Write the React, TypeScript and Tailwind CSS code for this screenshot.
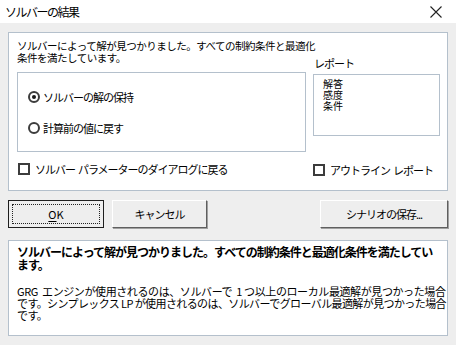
import React from "react";

const font = { fontFamily: '"Noto Sans CJK JP", "Noto Sans", sans-serif' };

function Radio({ checked }: { checked?: boolean }) {
  return (
    <span className="w-[12px] h-[12px] rounded-full border-2 border-[#3c3c3c] bg-white flex items-center justify-center shrink-0">
      {checked && <span className="w-[4px] h-[4px] rounded-full bg-[#1a1a1a]" />}
    </span>
  );
}

function Check() {
  return <span className="w-[12px] h-[12px] border-2 border-[#3c3c3c] bg-white shrink-0" />;
}

function Btn({ w, children }: { w: string; children: React.ReactNode }) {
  return (
    <div
      className={`${w} h-[28px] flex items-center justify-center border-t border-l border-white border-r border-b border-r-[#5f5f5f] border-b-[#5f5f5f] shadow-[1px_1px_0_#a0a0a0] text-[11px] tracking-[-1px] text-black`}
    >
      {children}
    </div>
  );
}

export default function App() {
  return (
    <div
      className="w-[456px] h-[345px] bg-[#eeeeee] text-black overflow-hidden leading-none"
      style={font}
    >
      <div className="h-[23px] bg-white flex items-center justify-between pl-[5px] pr-[14px]">
        <span className="text-[12px] tracking-[-1.5px]">ソルバーの結果</span>
        <svg width="12" height="12" viewBox="0 0 12 12">
          <path d="M0.5 0.5 L11.5 11.5 M11.5 0.5 L0.5 11.5" stroke="#222" strokeWidth="1.1" />
        </svg>
      </div>
      <div className="px-[8px] pt-[9px]">
        <div className="h-[159px] bg-white border border-[#b4c0cc] pl-[8px] pt-[7px]">
          <div className="flex">
            <div className="w-[289px] flex flex-col">
              <div className="text-[10.5px] tracking-[-0.5px] leading-[12px] whitespace-nowrap">
                ソルバーによって解が見つかりました。すべての制約条件と最適化
                <br />
                条件を満たしています。
              </div>
              <div className="mt-[8px] h-[80px] border border-[#b4c0cc] pl-[10px] flex flex-col">
                <div className="flex items-center gap-[3px] mt-[18px]">
                  <Radio checked />
                  <span className="text-[11px] tracking-[-1px]">ソルバーの解の保持</span>
                </div>
                <div className="flex items-center gap-[3px] mt-[19px]">
                  <Radio />
                  <span className="text-[11px] tracking-[-1px]">計算前の値に戻す</span>
                </div>
              </div>
            </div>
            <div className="ml-[7px] w-[127px] flex flex-col">
              <div className="mt-[18px] h-[14px] text-[11px] tracking-[-1px] pl-[1px]">レポート</div>
              <div className="mt-[2px] h-[62px] border border-[#b4c0cc] pl-[9px] pt-[3px] text-[10px] leading-[11px]">
                <div>解答</div>
                <div>感度</div>
                <div>条件</div>
              </div>
            </div>
          </div>
          <div className="flex mt-[10px]">
            <div className="w-[296px] flex items-center gap-[5px] pl-[1px]">
              <Check />
              <span className="text-[11px] tracking-[-1px] whitespace-pre">ソルバー  パラメーターのダイアログに戻る</span>
            </div>
            <div className="flex items-center gap-[5px] mt-[2px]">
              <Check />
              <span className="text-[11px] tracking-[-1px] whitespace-pre">アウトライン  レポート</span>
            </div>
          </div>
        </div>
        <div className="flex mt-[9px] h-[28px]">
          <div className="w-[96px] h-[28px] border border-[#1e1e1e] p-[3px]">
            <div className="w-full h-full border border-dotted border-[#222] flex items-center justify-center text-[11px]">
              <span className="underline underline-offset-2">O</span>K
            </div>
          </div>
          <div className="ml-[8px]">
            <Btn w="w-[95px]">キャンセル</Btn>
          </div>
          <div className="ml-auto">
            <Btn w="w-[128px]">シナリオの保存...</Btn>
          </div>
        </div>
        <div className="mt-[12px] h-[96px] bg-white border border-[#b4c0cc] pl-[8px] pt-[4px] pr-[6px] overflow-hidden">
          <div className="text-[12px] font-bold tracking-[-1px] leading-[13px]">
            ソルバーによって解が見つかりました。すべての制約条件と最適化条件を満たしています。
          </div>
          <div className="mt-[14px] text-[11px] leading-[12px] whitespace-pre">
            <div className="tracking-[-0.4px]">{"GRG  エンジンが使用されるのは、ソルバーで  1 つ以上のローカル最適解が見つかった場合"}</div>
            <div className="tracking-[-0.6px]">{"です。シンプレックス LP が使用されるのは、ソルバーでグローバル最適解が見つかった場合"}</div>
            <div className="tracking-[-0.6px]">です。</div>
          </div>
        </div>
      </div>
    </div>
  );
}
